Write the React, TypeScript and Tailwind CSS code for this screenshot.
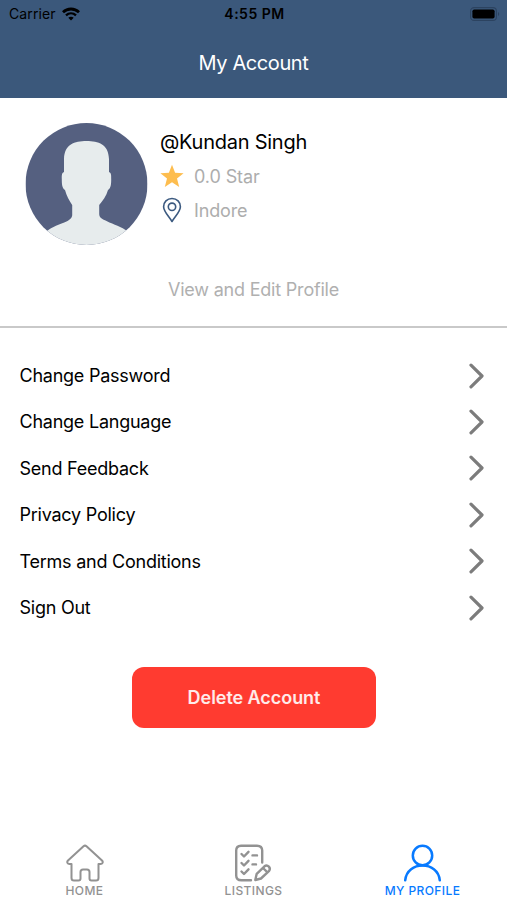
const menuItems = [
  "Change Password",
  "Change Language",
  "Send Feedback",
  "Privacy Policy",
  "Terms and Conditions",
  "Sign Out",
];

const StatusBar = () => (
  <div className="flex h-7 items-center justify-between pl-[9px] pr-[7px] text-black">
    <div className="flex w-[100px] items-center gap-[6px]">
      <span className="text-[14px] leading-4 tracking-[0.1px]">Carrier</span>
      <svg width="18" height="14" viewBox="0 0 18 14" fill="none" stroke="currentColor">
        <path d="M1 5.2C5.5 0.9 12.5 0.9 17 5.2" strokeWidth="2.8" />
        <path d="M4 8.3C6.9 5.7 11.1 5.7 14 8.3" strokeWidth="2.4" />
        <path d="M9 13.4L6.3 10.7C7.8 9.3 10.2 9.3 11.7 10.7Z" fill="currentColor" stroke="none" />
      </svg>
    </div>
    <span className="text-[14px] font-semibold leading-4 tracking-[0.5px]">4:55 PM</span>
    <div className="flex w-[100px] justify-end">
      <svg width="30" height="14" viewBox="0 0 30 14">
        <rect x="0.6" y="0.6" width="25.8" height="12.8" rx="3.5" fill="none" stroke="#2c4360" strokeWidth="1.1" />
        <rect x="2.4" y="2.4" width="22.2" height="9.2" rx="1.8" fill="#000" />
        <path d="M28 5v4c1.6-.7 1.6-3.3 0-4Z" fill="#2c4360" />
      </svg>
    </div>
  </div>
);

const Avatar = () => (
  <svg width="123" height="122" viewBox="-0.5 0 123 122" className="shrink-0">
    <defs>
      <clipPath id="avatar-circle">
        <circle cx="61" cy="61" r="61" />
      </clipPath>
    </defs>
    <g clipPath="url(#avatar-circle)">
      <rect width="122" height="122" fill="#556080" />
      <path
        d="M61 18C49 18 39 21 38.5 36V49C36 50 36.3 53 36.3 56C36.3 61 36.5 65 39.5 67C41 73 44 78 46.7 82V92C46.7 95 44 97 41 98.500C33 102 28 103 20 109V122H103V109C95 103 89 102 81 98C77 96 73.700 95 73.700 91V82C77 78 81 73 82.500 67C85.500 65 85.700 61 85.700 56C85.700 53 86 50 83.500 49V36C83 21 73 18 61 18Z"
        fill="#e7eced"
      />
    </g>
  </svg>
);

const StarIcon = () => (
  <svg width="24" height="24" viewBox="0 0 24 24" fill="#fdbd4f">
    <path d="M12 .8 15.100 8.700 23.600 9.200 17 14.600 19.200 23 12 18.300 4.800 23 7 14.600.4 9.200 8.900 8.700Z" />
  </svg>
);

const PinIcon = () => (
  <svg width="24" height="26" viewBox="0 0 24 26" fill="none" stroke="#3c5a80" strokeWidth="1.6">
    <path d="M12 1.500C7 1.500 3.600 5 3.600 9.700C3.600 14.500 9 19.500 12 24.500C15 19.500 20.400 14.500 20.400 9.700C20.400 5 17 1.500 12 1.500Z" strokeLinejoin="round" />
    <circle cx="12" cy="9.800" r="3.700" />
  </svg>
);

const HomeIcon = () => (
  <svg width="40" height="38" viewBox="0 0 40 38" fill="none" stroke="currentColor" strokeWidth="2" strokeLinejoin="round" strokeLinecap="round">
    <path d="M18.500 2.200Q20 1 21.500 2.200L37 16.500C38.500 18 37.500 20 35.500 20H33.500V34Q33.500 36.500 31 36.500H26.500Q24.500 36.500 24.500 34.500V28Q24.500 25.500 22 25.500H18Q15.500 25.500 15.500 28V34.500Q15.500 36.500 13.500 36.500H9Q6.500 36.500 6.500 34V20H4.500C2.500 20 1.500 18 3 16.500Z" />
  </svg>
);

const ListingsIcon = () => (
  <svg width="40" height="38" viewBox="1 0 40 38" fill="none" stroke="currentColor" strokeWidth="2.400" strokeLinejoin="round" strokeLinecap="round">
    <path d="M18 36.300H8.500Q3.200 36.300 3.200 31.500V6.500Q3.200 1.700 8 1.700H24Q29.200 1.700 29.200 6.500V18.500" />
    <path d="M8.500 10 11 12.500 15.500 7.800M8.500 19 11 21.500 15.500 16.800M8.500 27.500 11 30 15.500 25.300" />
    <path d="M19.500 11.400H24M19.500 20.400H23" />
    <path d="M22.300 36 23.700 29.800 31.500 22.300Q33.700 20.500 35.900 22.600Q37.800 24.800 35.900 27.200L28 34.500Z" />
    <path d="M30.500 24.500 34 27.800" />
  </svg>
);

const ProfileIcon = () => (
  <svg width="40" height="38" viewBox="0.5 0 40 38" fill="none" stroke="currentColor" strokeWidth="2.500" strokeLinecap="round">
    <circle cx="20" cy="11.500" r="9.700" />
    <path d="M2.700 36.300C4.500 16.500 35.500 16.500 37.300 36.300" />
  </svg>
);

const App = () => {
  return (
    <div className="flex h-[900px] w-[507px] flex-col bg-white font-['Inter',sans-serif] text-black">
      <header className="h-[98px] bg-[#3b587b]">
        <StatusBar />
        <h1 className="mt-[21px] text-center text-[20px] leading-7 tracking-[-0.4px] text-white">My Account</h1>
      </header>

      <section className="flex h-[230px] flex-col border-b-2 border-[#c9c9c9]">
        <div className="flex gap-3 pl-[25px] pt-[25px]">
          <Avatar />
          <div className="pt-[5px]">
            <h2 className="text-[20px] leading-7 tracking-[-0.25px]">@Kundan Singh</h2>
            <div className="mt-[3px] flex h-[34px] items-center gap-[10px] text-[#adadad]">
              <StarIcon />
              <span className="text-[18px] tracking-[-0.1px]">0.0 Star</span>
            </div>
            <div className="flex h-[34px] items-center gap-[10px] text-[#adadad]">
              <PinIcon />
              <span className="text-[18px] tracking-[-0.15px]">Indore</span>
            </div>
          </div>
        </div>
        <button className="mt-[31px] text-center text-[18px] leading-7 tracking-[-0.2px] text-[#b0b0b0]">View and Edit Profile</button>
      </section>

      <ul className="pt-[24.4px]">
        {menuItems.map((item) => (
          <li key={item} className="flex h-[46.4px] items-center justify-between pl-[19.5px] pr-[22px]">
            <span className="text-[18px] tracking-[-0.24px]">{item}</span>
            <svg width="17" height="26" viewBox="0 0 17 26" fill="none" stroke="#7c7c7c" strokeWidth="3.200" strokeLinecap="round" strokeLinejoin="round">
              <path d="M3 2.200 14 13 3 23.800" />
            </svg>
          </li>
        ))}
      </ul>

      <button className="ml-[132px] mt-[36.6px] h-[61px] w-[244px] rounded-[12px] bg-[#ff3b30] text-[18px] font-semibold tracking-[-0.05px] text-white/90">
        Delete Account
      </button>

      <nav className="mt-auto grid h-[56px] grid-cols-3 text-[12px] font-medium tracking-[0.4px] text-[#929292]">
        <div className="flex flex-col items-center">
          <HomeIcon />
          <span className="mt-px leading-4">HOME</span>
        </div>
        <div className="flex flex-col items-center">
          <ListingsIcon />
          <span className="mt-px leading-4">LISTINGS</span>
        </div>
        <div className="flex flex-col items-center text-[#087aff]">
          <ProfileIcon />
          <span className="mt-px leading-4">MY PROFILE</span>
        </div>
      </nav>
    </div>
  );
};

export default App;
